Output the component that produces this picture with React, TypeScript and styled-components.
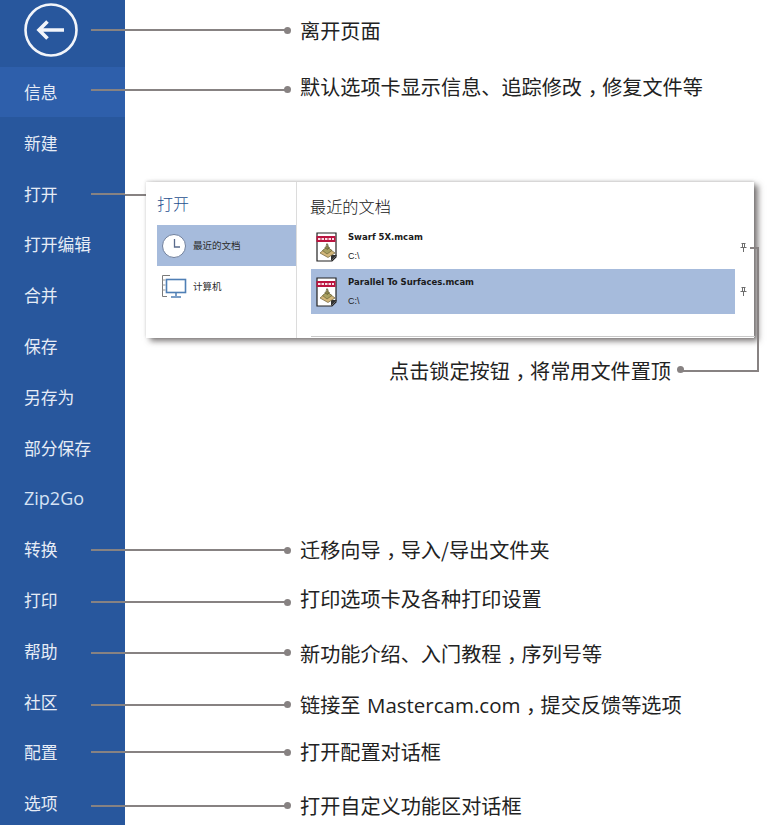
import React from 'react'
import styled, { createGlobalStyle } from 'styled-components'

const GlobalStyle = createGlobalStyle`
  html, body {
    margin: 0;
    background: #fff;
    font-family: "Noto Sans CJK SC", "Liberation Sans", sans-serif;
  }
`

const SIDE = '#28579d'
const ACTIVE = '#2e5fab'
const LINE = '#878282'
const SELECT = '#a6bbdc'

const Page = styled.div`
  position: relative;
  width: 775px;
  height: 825px;
  overflow: hidden;
  background: #fff;
`

const Row = styled.div<{ $height: number }>`
  display: flex;
  height: ${p => p.$height}px;
`

const MenuCell = styled.div<{ $active?: boolean }>`
  width: 125px;
  flex: none;
  display: flex;
  align-items: center;
  box-sizing: border-box;
  padding-left: 24px;
  background: ${p => (p.$active ? ACTIVE : SIDE)};
`

const MenuLabel = styled.span<{ $latin?: boolean }>`
  width: 67px;
  flex: none;
  color: ${p => (p.$latin ? '#d5e2f4' : '#e6ecf6')};
  font-family: ${p => (p.$latin ? '"Open Sans", sans-serif' : 'inherit')};
  font-size: ${p => (p.$latin ? '18px' : '16.8px')};
  line-height: 20px;
  white-space: nowrap;
`

const BackButton = styled.svg`
  width: 54px;
  height: 54px;
  margin-right: 13px;
  flex: none;
  margin-top: -6px;
`

const Stub = styled.i<{ $shift: number }>`
  flex: 1;
  height: 2px;
  background: ${LINE};
  margin-top: ${p => p.$shift}px;
`

const Callout = styled.div<{ $shift: number }>`
  flex: 1;
  display: flex;
  align-items: center;
  margin-top: ${p => p.$shift}px;
`

const Leader = styled.i`
  width: 160px;
  height: 2px;
  background: ${LINE};
  flex: none;
`

const Dot = styled.i`
  width: 7px;
  height: 7px;
  border-radius: 50%;
  background: ${LINE};
  flex: none;
  margin-left: -1px;
`

const Note = styled.span<{ $shift: number }>`
  margin-left: 9px;
  font-size: 20.15px;
  font-weight: 400;
  line-height: 26px;
  color: #222;
  white-space: nowrap;
  position: relative;
  top: ${p => p.$shift}px;
`

/* the reference sets the full-width comma in the middle of its cell */
const Comma = styled.span`
  padding-left: 0.28em;
  letter-spacing: -0.28em;
`

const Latin = styled.span`
  font-family: "Open Sans", sans-serif;
  font-size: 20.5px;
  margin-left: 2px;
`

const Panel = styled.section`
  position: absolute;
  left: 146px;
  top: 182px;
  width: 608px;
  height: 156px;
  display: flex;
  background: #fff;
  box-shadow: 4px 3px 6px rgba(50, 45, 45, 0.65), 0 -1px 3px rgba(0, 0, 0, 0.14);
`

const PanelNav = styled.div`
  width: 151px;
  flex: none;
  box-sizing: border-box;
  padding: 10px 0 0 11px;
  border-right: 1px solid #dcdcdc;
`

const NavTitle = styled.h2`
  margin: 0 0 10px;
  font-size: 16px;
  font-weight: 300;
  line-height: 23px;
  color: #1f4f8f;
`

const NavItem = styled.div<{ $selected?: boolean }>`
  height: 41px;
  display: flex;
  align-items: center;
  gap: 6px;
  padding-left: 4px;
  background: ${p => (p.$selected ? SELECT : 'transparent')};
  font-size: 9.5px;
  color: #2b2b2b;
`

const NavText = styled.span`
  margin-top: -2px;
`

const PanelMain = styled.div`
  flex: 1;
  display: flex;
  flex-direction: column;
  padding: 13px 0 0 14px;
`

const MainTitle = styled.h2`
  margin: 0 0 7px -1px;
  font-size: 16.2px;
  font-weight: 300;
  line-height: 23px;
  color: #161616;
`

const FileList = styled.div`
  width: 424px;
  flex: none;
`

const FileRow = styled.div<{ $selected?: boolean }>`
  position: relative;
  height: ${p => (p.$selected ? 45 : 44)}px;
  display: flex;
  align-items: center;
  gap: 10px;
  padding-left: 5px;
  background: ${p => (p.$selected ? SELECT : 'transparent')};
`

const FileText = styled.div`
  display: flex;
  flex-direction: column;
  gap: 9px;
  margin-top: -1px;
`

const FileName = styled.b`
  font-family: "DejaVu Sans", sans-serif;
  font-size: 8.5px;
  line-height: 10px;
  color: #1a1a1a;
`

const FilePath = styled.span`
  font-family: "Liberation Sans", sans-serif;
  font-size: 9px;
  line-height: 10px;
  color: #222;
`

const Pin = styled.svg`
  position: absolute;
  left: 429px;
  top: 18px;
  width: 7px;
  height: 9px;
`

const Rule = styled.div`
  width: 444px;
  height: 1px;
  margin-top: 22px;
  background: #c9c9c9;
`

const PinLeaderDown = styled.div`
  position: absolute;
  left: 679px;
  top: 247px;
  width: 78px;
  height: 123px;
  border-right: 2px solid ${LINE};
  border-bottom: 2px solid ${LINE};

  &::before {
    content: '';
    position: absolute;
    right: 0;
    top: 0;
    width: 7px;
    height: 2px;
    background: ${LINE};
  }

  &::after {
    content: '';
    position: absolute;
    left: -2px;
    bottom: -3px;
    width: 7px;
    height: 7px;
    border-radius: 50%;
    background: ${LINE};
  }
`

const PinNote = styled.span`
  position: absolute;
  left: 389px;
  top: 358px;
  font-size: 20.15px;
  font-weight: 400;
  line-height: 26px;
  color: #222;
  white-space: nowrap;
`

const OpenStub = styled.i`
  position: absolute;
  left: 125px;
  top: 194px;
  width: 21px;
  height: 2px;
  background: ${LINE};
`

const ClockIcon = () => (
  <svg width="26" height="26" viewBox="0 0 26 26">
    <circle cx="13" cy="13" r="11.5" fill="#fff" stroke="#6f7f9c" strokeWidth="1" />
    <path d="M13.5 6v8H19" fill="none" stroke="#5a6b8c" strokeWidth="1.3" />
  </svg>
)

const ComputerIcon = () => (
  <svg width="26" height="26" viewBox="0 0 26 26">
    <path d="M9 1.500H1.500v21H6" fill="none" stroke="#7a7a7a" strokeWidth="1" />
    <path d="M1.500 6h3M1.500 11h3M1.500 16h3" stroke="#9a9a9a" strokeWidth="1" />
    <rect x="5.500" y="5.500" width="19" height="13" fill="#fff" stroke="#4f7fb5" strokeWidth="1.600" />
    <path d="M15 19v3M10 23h10" stroke="#4f7fb5" strokeWidth="1.500" />
  </svg>
)

const FileIcon = () => (
  <svg width="22" height="30" viewBox="0 0 22 30">
    <path d="M1 1h19v24l-4 4H1z" fill="#fff" stroke="#222" strokeWidth="1.200" />
    <path d="M15 29l6-6h-6z" fill="#333" />
    <rect x="0.500" y="4" width="19" height="6" fill="#bb1440" />
    <path d="M2 7h16" stroke="#f6dfe4" strokeWidth="2" strokeDasharray="2.500 1" />
    <path d="M4 21l7-6 8 6-7 4.500z" fill="#d2b67a" stroke="#6f6238" strokeWidth="0.700" />
    <path d="M6.500 18.500l4.500-3.500 5 3.500-5 3.500z" fill="#a8a062" stroke="#5f5a2e" strokeWidth="0.600" />
    <path d="M9 15.500l2-2 2.500 2-2.500 2zM10 13.500l1-2 1.500 2" fill="#8c8650" stroke="#4f4a26" strokeWidth="0.600" />
  </svg>
)

const PinIcon = () => (
  <Pin viewBox="0 0 7 9">
    <path d="M1.500.5h4M2.500.5v4M4.500.5v4M.5 4.500h6M3.500 4.500V9" fill="none" stroke="#6d6d6d" strokeWidth="1" />
  </Pin>
)

interface Item {
  label: string
  note?: React.ReactNode
  lineShift?: number
  noteShift?: number
  active?: boolean
  stub?: boolean
  latin?: boolean
}

const items: Item[] = [
  {
    label: '信息',
    note: <>默认选项卡显示信息、追踪修改<Comma>，</Comma>修复文件等</>,
    lineShift: -4,
    noteShift: -3,
    active: true,
  },
  { label: '新建' },
  { label: '打开', stub: true },
  { label: '打开编辑' },
  { label: '合并' },
  { label: '保存' },
  { label: '另存为' },
  { label: '部分保存' },
  { label: 'Zip2Go', latin: true },
  { label: '转换', note: <>迁移向导<Comma>，</Comma>导入/导出文件夹</>, lineShift: 2, noteShift: 0 },
  { label: '打印', note: '打印选项卡及各种打印设置', lineShift: 5, noteShift: -3 },
  { label: '帮助', note: <>新功能介绍、入门教程<Comma>，</Comma>序列号等</>, lineShift: 4, noteShift: 1 },
  {
    label: '社区',
    note: <>链接至 <Latin>Mastercam.com</Latin><Comma>，</Comma>提交反馈等选项</>,
    lineShift: 6,
    noteShift: 0,
  },
  { label: '配置', note: '打开配置对话框', lineShift: 0, noteShift: 0 },
  { label: '选项', note: '打开自定义功能区对话框', lineShift: 5, noteShift: 0 },
]

const App: React.FC = () => {
  return (
    <Page>
      <GlobalStyle />
      <Row $height={66.6}>
        <MenuCell>
          <BackButton viewBox="0 0 54 54">
            <circle cx="27" cy="27" r="25.500" fill="none" stroke="#f2f5fa" strokeWidth="2.600" />
            <path d="M40 27H15.500M23.500 18.500L15 27l8.500 8.500" fill="none" stroke="#f2f5fa" strokeWidth="3.600" />
          </BackButton>
          <Stub $shift={-6} />
        </MenuCell>
        <Callout $shift={-6}>
          <Leader />
          <Dot />
          <Note $shift={1}>离开页面</Note>
        </Callout>
      </Row>
      {items.map(item => (
        <Row $height={50.8} key={item.label}>
          <MenuCell $active={item.active}>
            <MenuLabel $latin={item.latin}>{item.label}</MenuLabel>
            {(item.note || item.stub) && <Stub $shift={item.lineShift ?? 0} />}
          </MenuCell>
          {item.note && (
            <Callout $shift={item.lineShift ?? 0}>
              <Leader />
              <Dot />
              <Note $shift={item.noteShift ?? 0}>{item.note}</Note>
            </Callout>
          )}
        </Row>
      ))}
      <OpenStub />
      <Panel>
        <PanelNav>
          <NavTitle>打开</NavTitle>
          <NavItem $selected>
            <ClockIcon />
            <NavText>最近的文档</NavText>
          </NavItem>
          <NavItem>
            <ComputerIcon />
            <NavText>计算机</NavText>
          </NavItem>
        </PanelNav>
        <PanelMain>
          <MainTitle>最近的文档</MainTitle>
          <FileList>
            <FileRow>
              <FileIcon />
              <FileText>
                <FileName>Swarf 5X.mcam</FileName>
                <FilePath>C:\</FilePath>
              </FileText>
              <PinIcon />
            </FileRow>
            <FileRow $selected>
              <FileIcon />
              <FileText>
                <FileName>Parallel To Surfaces.mcam</FileName>
                <FilePath>C:\</FilePath>
              </FileText>
              <PinIcon />
            </FileRow>
          </FileList>
          <Rule />
        </PanelMain>
      </Panel>
      <PinLeaderDown />
      <PinNote>点击锁定按钮<Comma>，</Comma>将常用文件置顶</PinNote>
    </Page>
  )
}

export default App
